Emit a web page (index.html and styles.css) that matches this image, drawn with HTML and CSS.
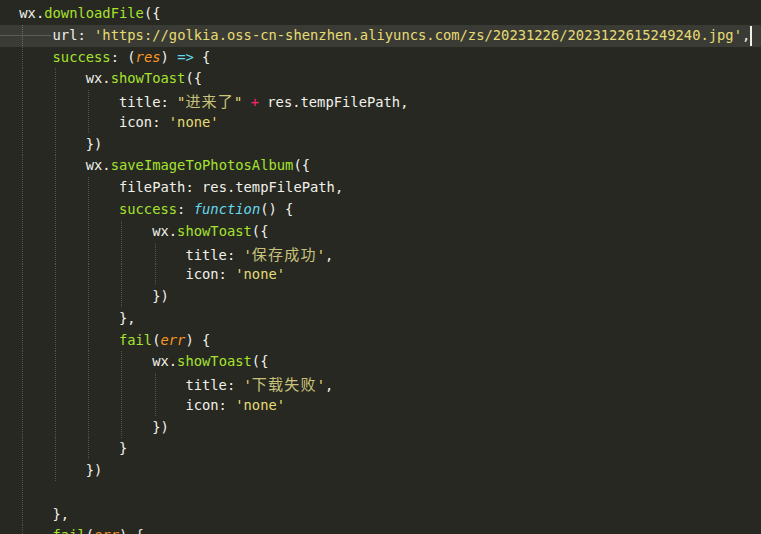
FILE: index.html
```html
<!DOCTYPE html>
<html lang="zh">
<head>
<meta charset="utf-8">
<title>editor</title>
<link rel="stylesheet" href="styles.css">
</head>
<body>
<div class="editor">
  <div class="line"><span class="code">wx.<span class="fn">downloadFile</span>({</span></div>
  <div class="line current"><i class="g"></i><span class="code">url: <span class="str">'https://golkia.oss-cn-shenzhen.aliyuncs.com/zs/20231226/2023122615249240.jpg'</span>,<span class="cursor"></span></span></div>
  <div class="line"><i class="g"></i><span class="code"><span class="fn">success</span>: (<span class="param">res</span>) <span class="kw">=&gt;</span> {</span></div>
  <div class="line"><i class="g"></i><i class="g"></i><span class="code">wx.<span class="fn">showToast</span>({</span></div>
  <div class="line"><i class="g"></i><i class="g"></i><i class="g"></i><span class="code">title: <span class="str">"<span class="cjk">进来了</span>"</span> <span class="op">+</span> res.tempFilePath,</span></div>
  <div class="line"><i class="g"></i><i class="g"></i><i class="g"></i><span class="code">icon: <span class="str">'none'</span></span></div>
  <div class="line"><i class="g"></i><i class="g"></i><span class="code">})</span></div>
  <div class="line"><i class="g"></i><i class="g"></i><span class="code">wx.<span class="fn">saveImageToPhotosAlbum</span>({</span></div>
  <div class="line"><i class="g"></i><i class="g"></i><i class="g"></i><span class="code">filePath: res.tempFilePath,</span></div>
  <div class="line"><i class="g"></i><i class="g"></i><i class="g"></i><span class="code"><span class="fn">success</span>: <span class="kw it">function</span>() {</span></div>
  <div class="line"><i class="g"></i><i class="g"></i><i class="g"></i><i class="g"></i><span class="code">wx.<span class="fn">showToast</span>({</span></div>
  <div class="line"><i class="g"></i><i class="g"></i><i class="g"></i><i class="g"></i><i class="g"></i><span class="code">title: <span class="str">'<span class="cjk">保存成功</span>'</span>,</span></div>
  <div class="line"><i class="g"></i><i class="g"></i><i class="g"></i><i class="g"></i><i class="g"></i><span class="code">icon: <span class="str">'none'</span></span></div>
  <div class="line"><i class="g"></i><i class="g"></i><i class="g"></i><i class="g"></i><span class="code">})</span></div>
  <div class="line"><i class="g"></i><i class="g"></i><i class="g"></i><span class="code">},</span></div>
  <div class="line"><i class="g"></i><i class="g"></i><i class="g"></i><span class="code"><span class="fn">fail</span>(<span class="param">err</span>) {</span></div>
  <div class="line"><i class="g"></i><i class="g"></i><i class="g"></i><i class="g"></i><span class="code">wx.<span class="fn">showToast</span>({</span></div>
  <div class="line"><i class="g"></i><i class="g"></i><i class="g"></i><i class="g"></i><i class="g"></i><span class="code">title: <span class="str">'<span class="cjk">下载失败</span>'</span>,</span></div>
  <div class="line"><i class="g"></i><i class="g"></i><i class="g"></i><i class="g"></i><i class="g"></i><span class="code">icon: <span class="str">'none'</span></span></div>
  <div class="line"><i class="g"></i><i class="g"></i><i class="g"></i><i class="g"></i><span class="code">})</span></div>
  <div class="line"><i class="g"></i><i class="g"></i><i class="g"></i><span class="code">}</span></div>
  <div class="line"><i class="g"></i><i class="g"></i><span class="code">})</span></div>
  <div class="line"><i class="g"></i><span class="code"></span></div>
  <div class="line"><i class="g"></i><span class="code">},</span></div>
  <div class="line"><i class="g"></i><span class="code"><span class="fn">fail</span>(<span class="param">err</span>) {</span></div>
</div>
</body>
</html>
```
FILE: styles.css
```css
html, body {
  margin: 0;
  padding: 0;
  background: #272822;
  height: 100%;
  overflow: hidden;
}

.editor {
  padding-top: 3.1px;
  font-family: "DejaVu Sans Mono", "Liberation Mono", monospace;
  font-size: 13.8px;
  color: #f1f1ea;
}

.line {
  display: flex;
  height: 21.78px;
  padding-left: 19.3px;
}

.line.current {
  background:
    linear-gradient(#5c5c56, #5c5c56) no-repeat 0 50% / 51px 1px,
    #3b3b35;
}

.g {
  flex: none;
  width: 4ch;
  height: 100%;
  background: repeating-linear-gradient(to bottom, #54544e 0 1px, transparent 1px 2px) no-repeat 2.4px 0 / 1px 100%;
}

.line.current .g {
  background: repeating-linear-gradient(to bottom, #6a6a64 0 1px, transparent 1px 2px) no-repeat 2.4px 0 / 1px 100%;
}

.code {
  white-space: pre;
  line-height: 21.78px;
}

.fn { color: #a6e22e; }
.str { color: #e6db74; }
.param { color: #fd971f; font-style: italic; }
.kw { color: #66d9ef; }
.it { font-style: italic; }
.op { color: #f92672; }

.cjk {
  font-family: "Noto Sans CJK SC", sans-serif;
  font-size: 15px;
  letter-spacing: 1.2px;
  color: #c9c27a;
}

.cursor {
  display: inline-block;
  width: 2px;
  height: 20px;
  margin-left: 0;
  vertical-align: middle;
  background: #f0f0ea;
}
```
